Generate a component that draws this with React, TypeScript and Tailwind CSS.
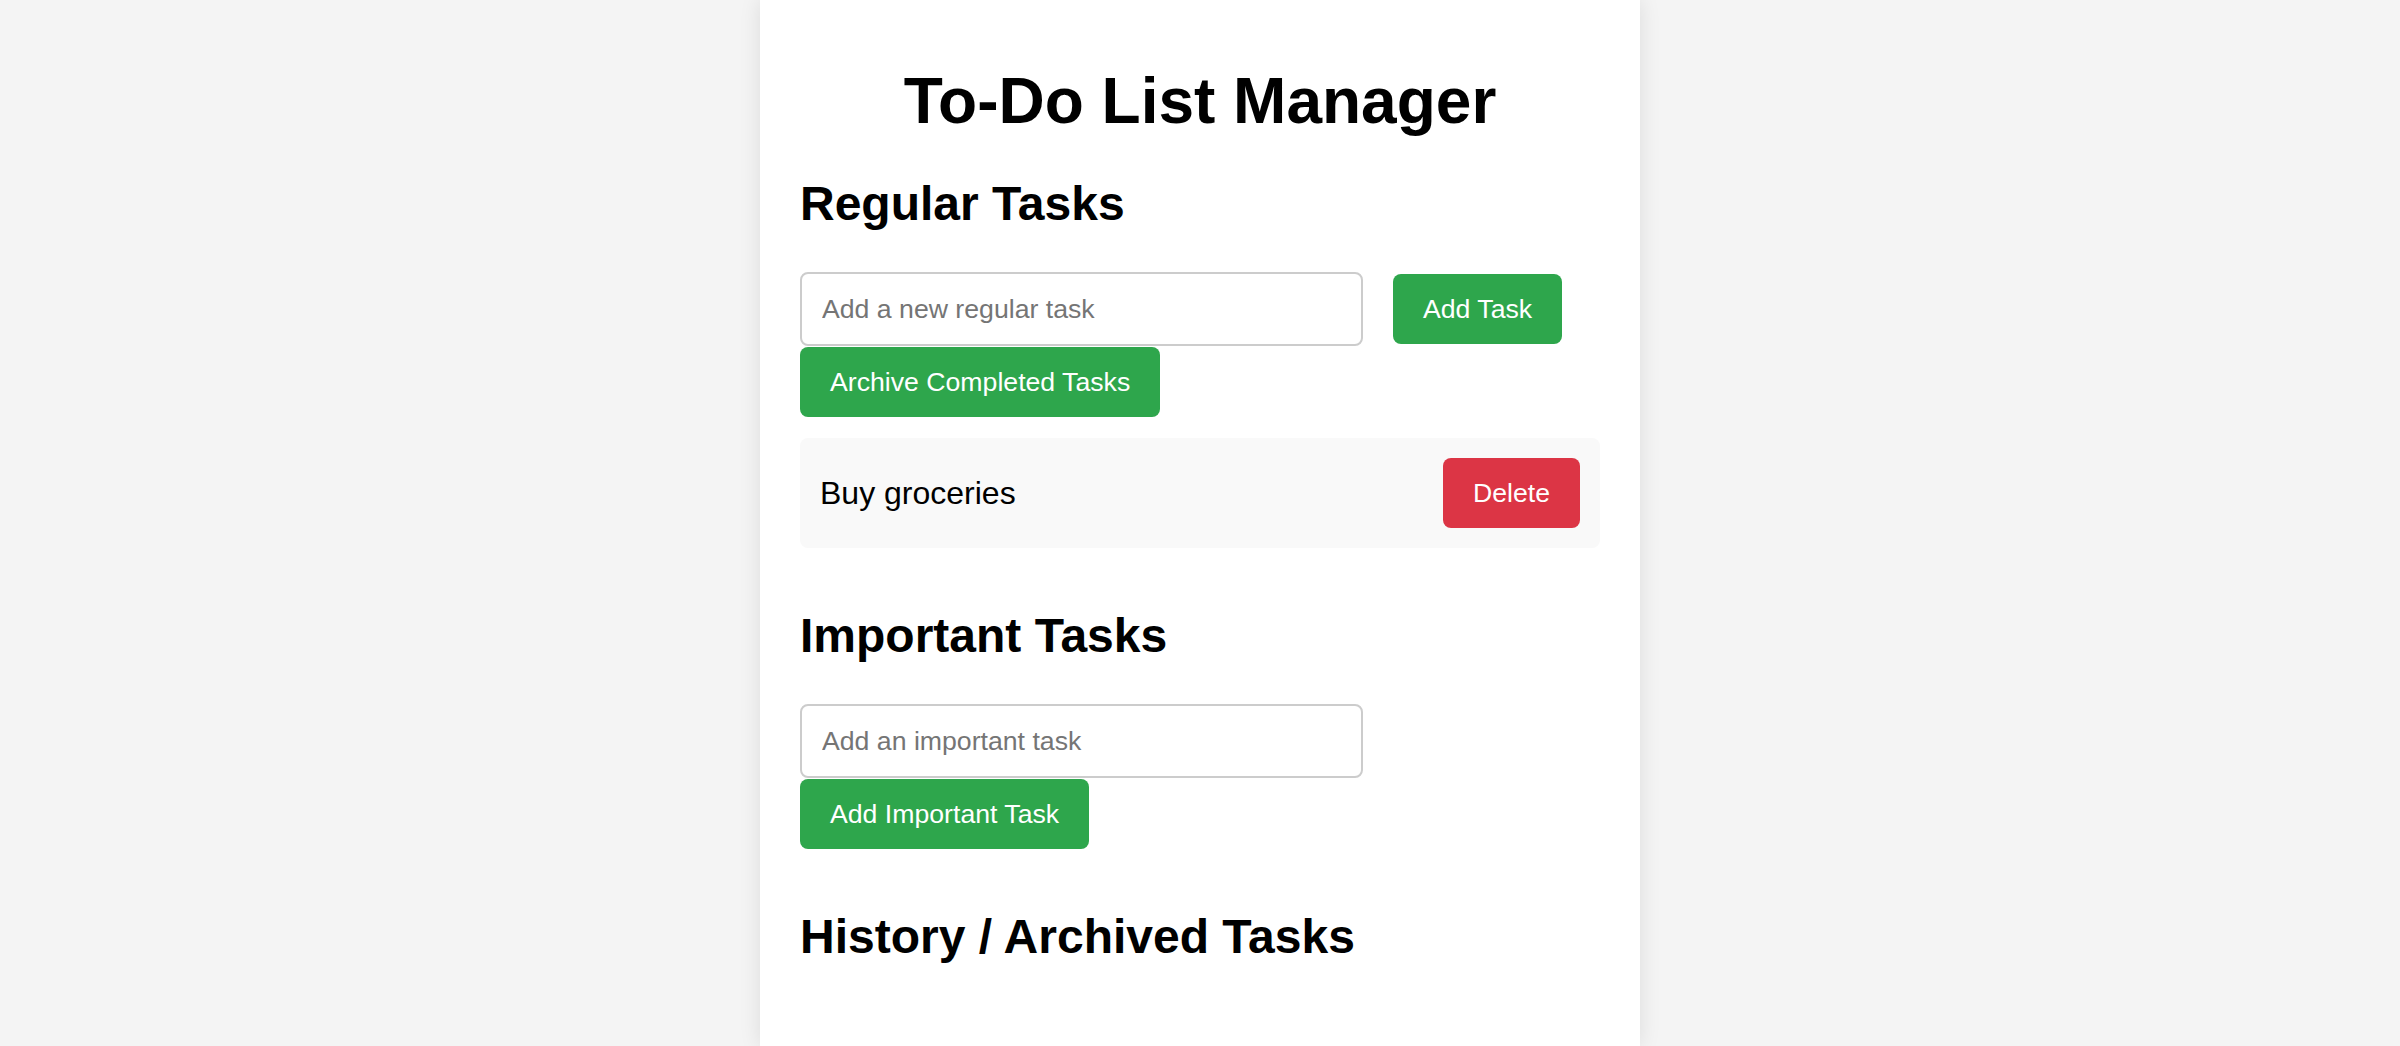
import { useState } from "react";

type Task = {
  id: number;
  text: string;
};

const buttonBase =
  "rounded-[8px] px-[30px] py-[20px] text-[26.67px] leading-[30px] text-white";

export default function App() {
  const [regular] = useState<Task[]>([{ id: 1, text: "Buy groceries" }]);

  return (
    <div className="min-h-screen bg-[#f4f4f4] font-['Liberation_Sans',Arial,sans-serif] text-black">
      <div className="mx-auto min-h-screen w-[880px] bg-white px-[40px] pt-[64px] shadow-[0_0_20px_rgba(0,0,0,0.1)]">
        <h1 className="mb-[38px] text-center text-[64px] font-bold leading-[74px]">
          To-Do List Manager
        </h1>

        <h2 className="text-[48px] font-bold leading-[56px]">Regular Tasks</h2>

        <div className="mt-[40px] flex flex-wrap items-baseline gap-x-[30px] gap-y-[1px]">
          <input
            type="text"
            placeholder="Add a new regular task"
            className="w-[563px] rounded-[8px] border-2 border-[#cccccc] bg-white p-[20px] text-[26.67px] leading-[30px] outline-none placeholder:text-[#757575]"
          />
          <button type="button" className={`${buttonBase} bg-[#2ea64c]`}>
            Add Task
          </button>
          <button type="button" className={`${buttonBase} bg-[#2ea64c]`}>
            Archive Completed Tasks
          </button>
        </div>

        <ul className="mt-[21px]">
          {regular.map((task) => (
            <li
              key={task.id}
              className="flex items-center justify-between rounded-[8px] bg-[#f9f9f9] p-[20px]"
            >
              <span className="text-[32px]">{task.text}</span>
              <button type="button" className={`${buttonBase} bg-[#dc3545]`}>
                Delete
              </button>
            </li>
          ))}
        </ul>

        <h2 className="mt-[60px] text-[48px] font-bold leading-[56px]">
          Important Tasks
        </h2>

        <div className="mt-[40px] flex flex-wrap items-baseline gap-x-[30px] gap-y-[1px]">
          <input
            type="text"
            placeholder="Add an important task"
            className="w-[563px] rounded-[8px] border-2 border-[#cccccc] bg-white p-[20px] text-[26.67px] leading-[30px] outline-none placeholder:text-[#757575]"
          />
          <button type="button" className={`${buttonBase} bg-[#2ea64c]`}>
            Add Important Task
          </button>
        </div>

        <h2 className="mt-[60px] text-[48px] font-bold leading-[56px]">
          History / Archived Tasks
        </h2>
      </div>
    </div>
  );
}
